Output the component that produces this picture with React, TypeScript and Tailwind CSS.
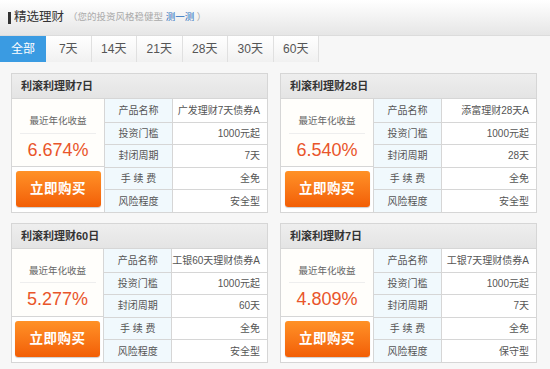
import React from 'react';

interface Product {
  title: string;
  rate: string;
  name: string;
  min: string;
  days: string;
  fee: string;
  risk: string;
}

const products: Product[] = [
  { title: '利滚利理财7日', rate: '6.674%', name: '广发理财7天债券A', min: '1000元起', days: '7天', fee: '全免', risk: '安全型' },
  { title: '利滚利理财28日', rate: '6.540%', name: '添富理财28天A', min: '1000元起', days: '28天', fee: '全免', risk: '安全型' },
  { title: '利滚利理财60日', rate: '5.277%', name: '工银60天理财债券A', min: '1000元起', days: '60天', fee: '全免', risk: '安全型' },
  { title: '利滚利理财7日', rate: '4.809%', name: '工银7天理财债券A', min: '1000元起', days: '7天', fee: '全免', risk: '保守型' },
];

const tabs = ['全部', '7天', '14天', '21天', '28天', '30天', '60天'];

const font = { fontFamily: '"Liberation Sans", "Noto Sans CJK SC", sans-serif' };

const ProductCard: React.FC<{ p: Product }> = ({ p }) => {
  const rows: [string, string][] = [
    ['产品名称', p.name],
    ['投资门槛', p.min],
    ['封闭周期', p.days],
    ['手 续 费', p.fee],
    ['风险程度', p.risk],
  ];
  return (
    <div className="border border-[#d6d6d6] bg-white">
      {/* header */}
      <div className="h-[25px] flex items-center pl-[9px] bg-gradient-to-b from-[#eeeeee] to-[#e4e4e4] border-b border-[#d6d6d6] text-[11px] font-bold text-[#333]">
        {p.title}
      </div>
      <div className="flex">
        {/* left: yield + button */}
        <div className="w-[93px] flex flex-col border-r border-[#d6d6d6]">
          <div className="h-[68px] flex flex-col items-center border-b border-[#d6d6d6] bg-[#fffefb]">
            <div className="mt-[17px] text-[9.5px] text-[#666] leading-none">最近年化收益</div>
            <div className="mt-[7px] w-[76px] border-t border-[#eeeeee]" />
            <div className="mt-[7px] text-[18px] leading-none text-[#e9552a]">{p.rate}</div>
          </div>
          <div className="flex-1 flex items-center justify-center">
            <button className="w-[85px] h-[36px] rounded-[3px] bg-gradient-to-b from-[#ff9126] to-[#f25e04] text-white text-[13.5px] font-bold tracking-[0.5px] shadow-[0_1px_1px_rgba(0,0,0,0.2)]">
              立即购买
            </button>
          </div>
        </div>
        {/* right: table */}
        <div className="flex-1 flex flex-col">
          {rows.map(([k, v], i) => (
            <div key={i} className={`flex h-[22.6px] ${i > 0 ? 'border-t border-[#d6d6d6]' : ''}`}>
              <div className="w-[68px] flex items-center justify-center bg-[#f1f9fd] border-r border-[#d6d6d6] text-[10px] text-[#555] whitespace-pre">
                {k}
              </div>
              <div className="flex-1 flex items-center justify-end pr-[7px] text-[10px] text-[#555] whitespace-nowrap">{v}</div>
            </div>
          ))}
        </div>
      </div>
    </div>
  );
};

const App: React.FC = () => {
  return (
    <div className="w-[550px] h-[369px] overflow-hidden bg-[#f7f7f7]" style={font}>
      {/* title bar */}
      <div className="h-[35px] flex items-center pl-[8px] bg-gradient-to-b from-[#ffffff] to-[#e6e6e6]">
        <span className="w-[3px] h-[12px] bg-[#333] mr-[3px]" />
        <span className="text-[12.5px] text-[#333]">精选理财</span>
        <span className="ml-[4px] text-[9.5px] text-[#aaa]">
          （您的投资风格稳健型 <span className="text-[#2a6fc0]">测一测</span> ）
        </span>
      </div>
      {/* tabs */}
      <div className="flex h-[27px] border-t border-[#dcdcdc]">
        {tabs.map((t, i) => (
          <div
            key={t}
            className={
              i === 0
                ? 'w-[46px] flex items-center justify-center bg-[#3a9be2] text-white text-[12px]'
                : 'w-[45.5px] flex items-center justify-center bg-gradient-to-b from-[#ffffff] to-[#f1f1f1] border-r border-[#e0e0e0] text-[12px] text-[#555]'
            }
          >
            {t}
          </div>
        ))}
      </div>
      {/* cards */}
      <div className="grid grid-cols-[257px_257px] gap-x-[12px] gap-y-[10px] pl-[11px] pt-[11px]">
        {products.map((p, i) => (
          <ProductCard key={i} p={p} />
        ))}
      </div>
    </div>
  );
};

export default App;
